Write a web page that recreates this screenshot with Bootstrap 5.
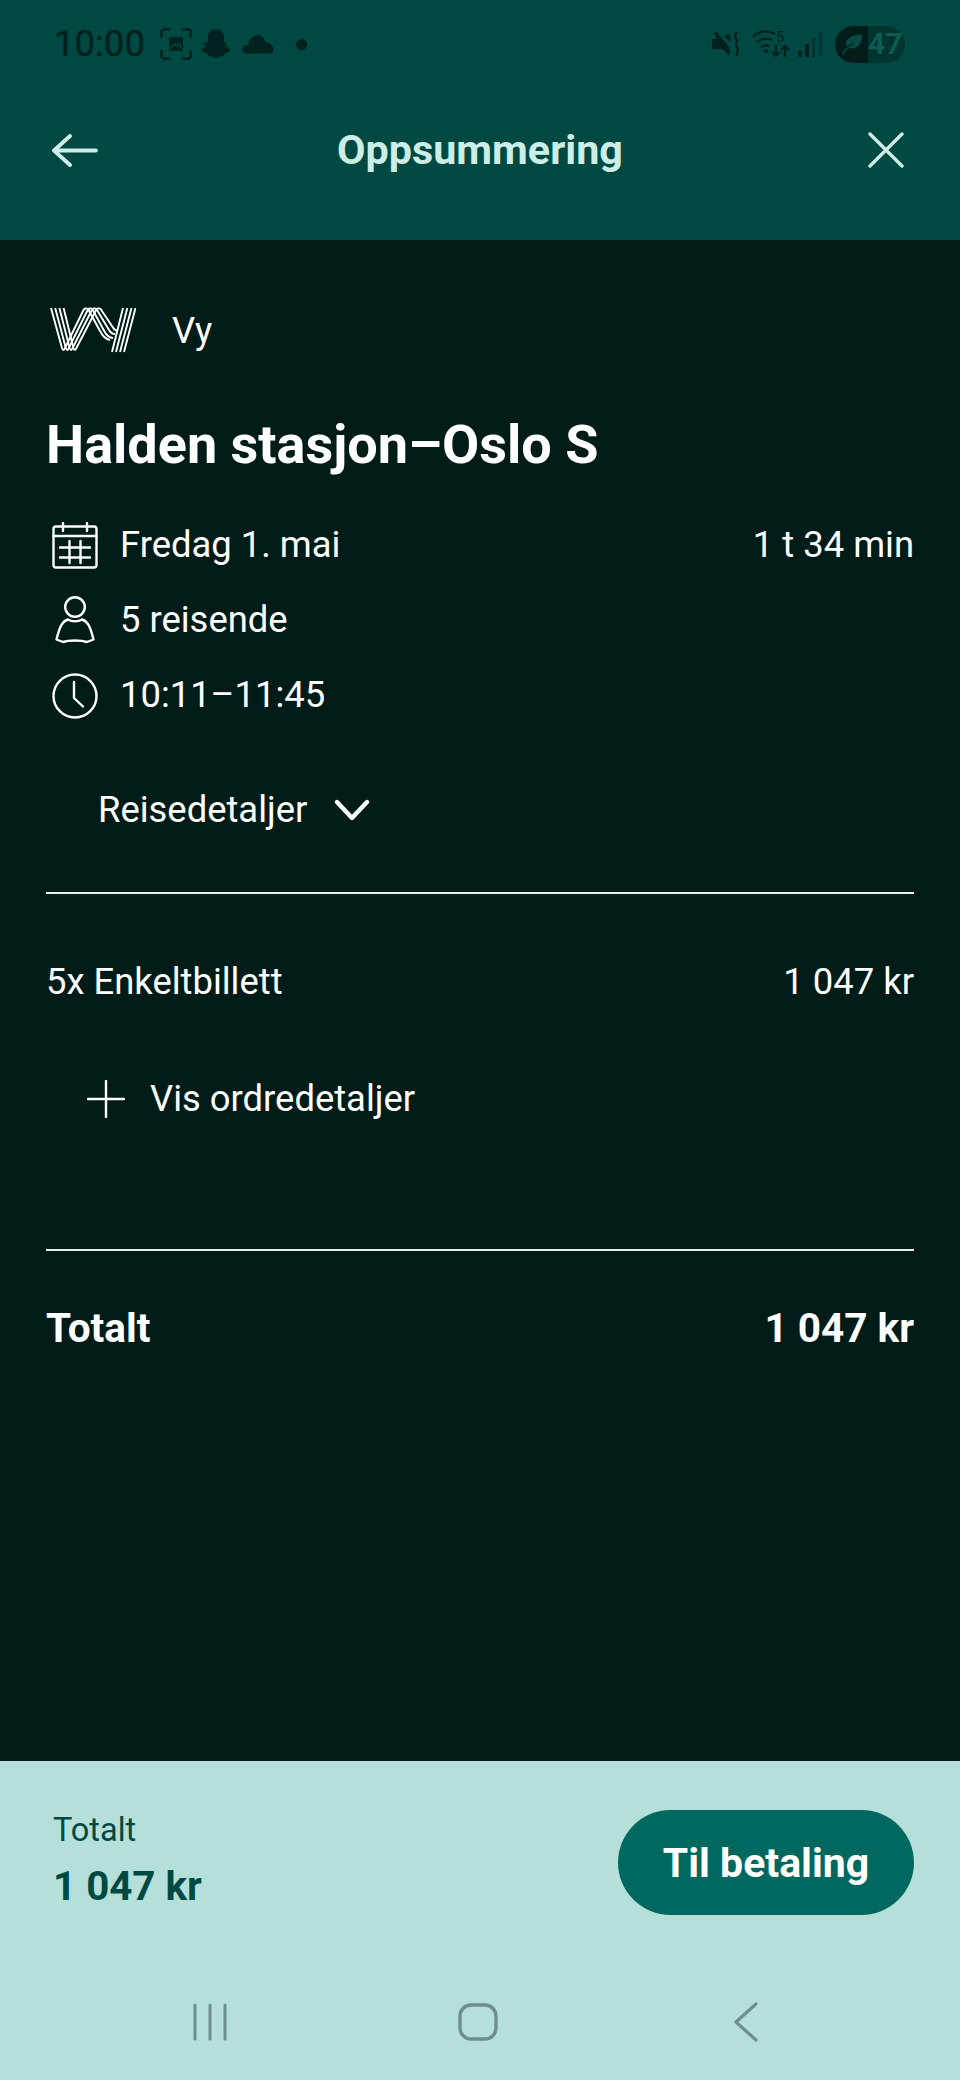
<!doctype html>
<html lang="no"><head><meta charset="utf-8"><title>Oppsummering</title>
<link href="https://cdn.jsdelivr.net/npm/bootstrap@5.3.0/dist/css/bootstrap.min.css" rel="stylesheet">
<style>
html,body{margin:0;background:#001c19}
body{font-family:Roboto,"Liberation Sans",sans-serif;color:#fff}
.screen{width:960px;height:2080px;overflow:hidden}
.top-area{height:240px;background:#004942;flex:none}
.status-row{height:88px;padding:0 55px 0 54px;color:#00211e}
.clock{font-size:36.500px;line-height:1;width:106px;-webkit-text-stroke:.4px #00211e}
.status-gap-a{margin-left:10px}
.status-gap-b{margin-left:22px}
.status-gap-c{margin-left:13px}
.title-row{height:124px;padding:0 56px 0 52px;color:#cdede7}
.top-title{font-size:41.300px;font-weight:700;margin:2px 6px 0 0;line-height:1}
.pill{width:70px;height:37px;border-radius:19px;overflow:hidden;background:#00352f;color:#0d5b52;font-size:30px;font-weight:700}
.pill-dark{width:33px;height:37px;background:#001d1a}
.main-area{padding:60px 46px 0;background:#001c19}
.brand-row{height:60px;padding-left:4px;font-size:36.400px}
.brand-name{margin:2px 0 0 36px}
.route{font-size:54px;font-weight:700;line-height:60px;height:60px;margin:55px 0 33px}
.info-row{height:75px;font-size:36.400px;line-height:1}
.icon-slot{width:58px;margin-right:16px}
.link-row{height:60px;font-size:36.400px;line-height:1}
.details{margin-top:47px;padding-left:52px}
.chev{margin-left:27px}
.rule{height:2px;background:#e8efee;margin:0}
.rule-a{margin-top:52px}
.rule-b{margin-top:120px}
.line-row{height:60px;font-size:36.400px;margin-top:58px}
.order{margin-top:57px;padding-left:41px}
.order-text{margin-left:25px}
.total-row{height:60px;margin-top:47px;font-size:40.500px;font-weight:700}
.bottom-area{height:319px;flex:none;background:#b5e0da;color:#004942}
.pay-row{padding:49px 46px 0 53px;height:241px}
.sum-label{font-size:32.500px;line-height:40px}
.sum-value{font-size:40.300px;font-weight:700;line-height:44px;margin-top:15px}
.pay-btn{width:296px;height:105px;border-radius:53px;background:#00685e;border:0;color:#fff;font-size:41px;font-weight:700;padding:3px 0 0}
.pay-btn:hover{background:#00685e;color:#fff}
.soft-nav{padding-left:76px}
.soft-item{width:268px}
</style></head>
<body>
<div class="screen d-flex flex-column">
<header class="top-area">
  <div class="status-row d-flex align-items-center justify-content-between">
    <div class="d-flex align-items-center">
      <span class="clock">10:00</span>
      <svg width="32" height="32" viewBox="0 0 32 32" fill="none" stroke="currentColor" stroke-width="2.400" stroke-linecap="round"><path d="M1.500 9V4Q1.500 1.500 4 1.500H9M23 1.500H28Q30.500 1.500 30.500 4V9M30.500 23V28Q30.500 30.500 28 30.500H23M9 30.500H4Q1.500 30.500 1.500 28V23"/><rect x="9" y="9" width="14" height="14" rx="2" fill="currentColor" stroke="none"/><path d="M11 20l3.500-4 2.500 2 2-2.500 2 4.500" stroke="#004942" stroke-width="1.500"/></svg>
      <svg class="ms-2" width="32" height="32" viewBox="0 0 32 32" fill="currentColor"><path d="M16 1c5 0 8 3.500 8 8v5l3 1.500-1.500 2 5 4.500c-1.500 2.500-4 2.500-6 3.500l-1 3c-2.500-.5-5 0-7.500 2-2.500-2-5-2.500-7.500-2l-1-3c-2-1-4.500-1-6-3.500l5-4.500L.5 15.500 8 14V9c0-4.500 3-8 8-8z"/></svg>
      <svg class="status-gap-a" width="32" height="20" viewBox="0 0 32 20" fill="currentColor"><path d="M6 19.500C2.500 19.500.5 17.500.5 15S3 10.500 6 11C7 5 11 1 15.500 1c4 0 7 3 8 7 4 0 8 4 8 8.500 0 1.500-1 3-3 3z"/></svg>
      <svg class="status-gap-b" width="11" height="11" viewBox="0 0 11 11" fill="currentColor"><circle cx="5.500" cy="5.500" r="5.500"/></svg>
    </div>
    <div class="d-flex align-items-center">
      <svg width="27" height="26" viewBox="0 0 27 26" fill="currentColor"><path d="M0 8h5l-3-6 2-2 14 17v8L10 18H0z"/><path d="M18 3v8l-6-6z"/><path d="M23 0c3 3-2 5 1 8s-2 5 1 8-2 5 0 9" fill="none" stroke="currentColor" stroke-width="2.200"/></svg>
      <svg class="status-gap-c" width="38" height="30" viewBox="0 0 38 30" fill="none" stroke="currentColor" stroke-width="2.200"><path d="M1 8C7 2 15 1 23 5M5 13c5-4 10-4 15-2M9 18c3-2 6-2 8-1"/><circle cx="14" cy="22" r="2" fill="currentColor" stroke="none"/><path d="M24 16v11m-4-4 4 4 4-4M33 28V17m-4 4 4-4 4 4"/><text x="24" y="13" font-size="15" fill="currentColor" stroke="none" font-family="Roboto">5</text></svg>
      <svg class="ms-2" width="24" height="26" viewBox="0 0 24 26"><rect x="0" y="20" width="4" height="6" fill="#00211e"/><rect x="7" y="13" width="4" height="13" fill="#00211e"/><rect x="14" y="7" width="3" height="19" fill="#00352f"/><rect x="21" y="0" width="3" height="26" fill="#00352f"/></svg>
      <div class="pill status-gap-c d-flex align-items-center">
        <div class="pill-dark d-flex align-items-center justify-content-center flex-shrink-0"><svg width="24" height="22" viewBox="0 0 24 22" fill="#0b4a42"><path d="M2 21c2-4 4-6 7-8 3-1 5-2 6-4-3 2-6 3-9 4C5 6 12 1 22 2c1 9-6 15-13 13-2 1-4 3-5 6z"/></svg></div>
        <span class="lh-1">47</span>
      </div>
    </div>
  </div>
  <div class="title-row d-flex align-items-center justify-content-between">
    <svg width="46" height="33" viewBox="0 0 46 33" fill="none" stroke="currentColor" stroke-width="3.800" stroke-linecap="round" stroke-linejoin="round"><path d="M44 16.500H2M18 2 2 16.500 18 31"/></svg>
    <h1 class="top-title">Oppsummering</h1>
    <svg width="36" height="36" viewBox="0 0 36 36" fill="none" stroke="currentColor" stroke-width="3.400" stroke-linecap="round"><path d="M2 2l32 32M34 2 2 34"/></svg>
  </div>
</header>
<main class="main-area flex-grow-1">
  <div class="brand-row d-flex align-items-center">
    <svg width="86" height="46" viewBox="0 0 86 46" fill="none" stroke="#fff" stroke-width="1.900">
      <path d="M1 1 12 41Q13.500 45 15 41L33 4Q35 0 38 2L50 24Q54 32 60 33"/>
      <path d="M5.200 1 15.800 41Q17.300 45 18.800 41L37.200 4Q39.200 0 42.200 2L54.200 24Q58 31 63 31"/>
      <path d="M9.400 1 19.600 41Q21.100 45 22.600 41L41.400 4Q43.400 0 46.400 2L58.400 22Q61 27 65 27"/>
      <path d="M13.600 1 23.400 41Q24.900 45 26.400 41L45.600 4Q47.600 0 50.600 2L62.600 20Q65 24 68 24"/>
      <path d="M73 1 62 45M77.300 1 66 45M81.500 1 70 45M85.500 1 74 45"/>
    </svg>
    <span class="brand-name">Vy</span>
  </div>
  <h2 class="route">Halden stasjon–Oslo S</h2>
  <div class="info-row d-flex align-items-center">
    <span class="icon-slot d-flex justify-content-center"><svg width="46" height="47" viewBox="0 0 46 47" fill="none" stroke="#fff" stroke-width="2.400" stroke-linecap="round"><rect x="1.500" y="4.500" width="43" height="41" rx="2.500"/><path d="M1.500 14h43M11 1v8M35 1v8M8 25.500h30M8 35.500h30M17.500 19v22M28.500 19v22"/></svg></span>
    <span>Fredag 1. mai</span><span class="ms-auto">1 t 34 min</span>
  </div>
  <div class="info-row d-flex align-items-center">
    <span class="icon-slot d-flex justify-content-center"><svg width="40" height="50" viewBox="0 0 40 50" fill="none" stroke="#fff" stroke-width="2.400" stroke-linejoin="round"><circle cx="20" cy="11" r="9.800"/><path d="M13 23.500C8 25 5 29 1.500 43.500L8 46C14 44 26 44 32 46L38.500 43.500C35 29 32 25 27 23.500 23 26 17 26 13 23.500Z"/></svg></span>
    <span>5 reisende</span>
  </div>
  <div class="info-row d-flex align-items-center">
    <span class="icon-slot d-flex justify-content-center"><svg width="46" height="46" viewBox="0 0 46 46" fill="none" stroke="#fff" stroke-width="2.400" stroke-linecap="round" stroke-linejoin="round"><circle cx="23" cy="23" r="21.500"/><path d="M22 9v16l9 8.500"/></svg></span>
    <span>10:11–11:45</span>
  </div>
  <div class="link-row details d-flex align-items-center">
    <span>Reisedetaljer</span>
    <svg class="chev" width="36" height="24" viewBox="0 0 36 24" fill="none" stroke="#fff" stroke-width="4.400" stroke-linecap="round" stroke-linejoin="round"><path d="M3 4l15 16L33 4"/></svg>
  </div>
  <div class="rule rule-a"></div>
  <div class="line-row d-flex align-items-center justify-content-between"><span>5x Enkeltbillett</span><span>1 047 kr</span></div>
  <div class="link-row order d-flex align-items-center">
    <svg width="38" height="38" viewBox="0 0 38 38" fill="none" stroke="#fff" stroke-width="2.400" stroke-linecap="round"><path d="M19 1v36M1 19h36"/></svg>
    <span class="order-text">Vis ordredetaljer</span>
  </div>
  <div class="rule rule-b"></div>
  <div class="total-row d-flex align-items-center justify-content-between"><span>Totalt</span><span>1 047 kr</span></div>
</main>
<footer class="bottom-area">
  <div class="pay-row d-flex justify-content-between align-items-start">
    <div>
      <div class="sum-label">Totalt</div>
      <div class="sum-value">1 047 kr</div>
    </div>
    <button type="button" class="btn pay-btn">Til betaling</button>
  </div>
  <div class="soft-nav d-flex align-items-center">
    <div class="soft-item d-flex justify-content-center"><svg width="36" height="38" viewBox="0 0 36 38" fill="none" stroke="#6f8e89" stroke-width="3" stroke-linecap="round"><path d="M3 2v34M18 2v34M33 2v34"/></svg></div>
    <div class="soft-item d-flex justify-content-center"><svg width="40" height="38" viewBox="0 0 40 38" fill="none" stroke="#6f8e89" stroke-width="3.400"><rect x="2" y="2" width="36" height="34" rx="11"/></svg></div>
    <div class="soft-item d-flex justify-content-center"><svg width="26" height="40" viewBox="0 0 26 40" fill="none" stroke="#6f8e89" stroke-width="3.200" stroke-linecap="round" stroke-linejoin="round"><path d="M23 2 3 20l20 18"/></svg></div>
  </div>
</footer>
</div>
</body></html>
